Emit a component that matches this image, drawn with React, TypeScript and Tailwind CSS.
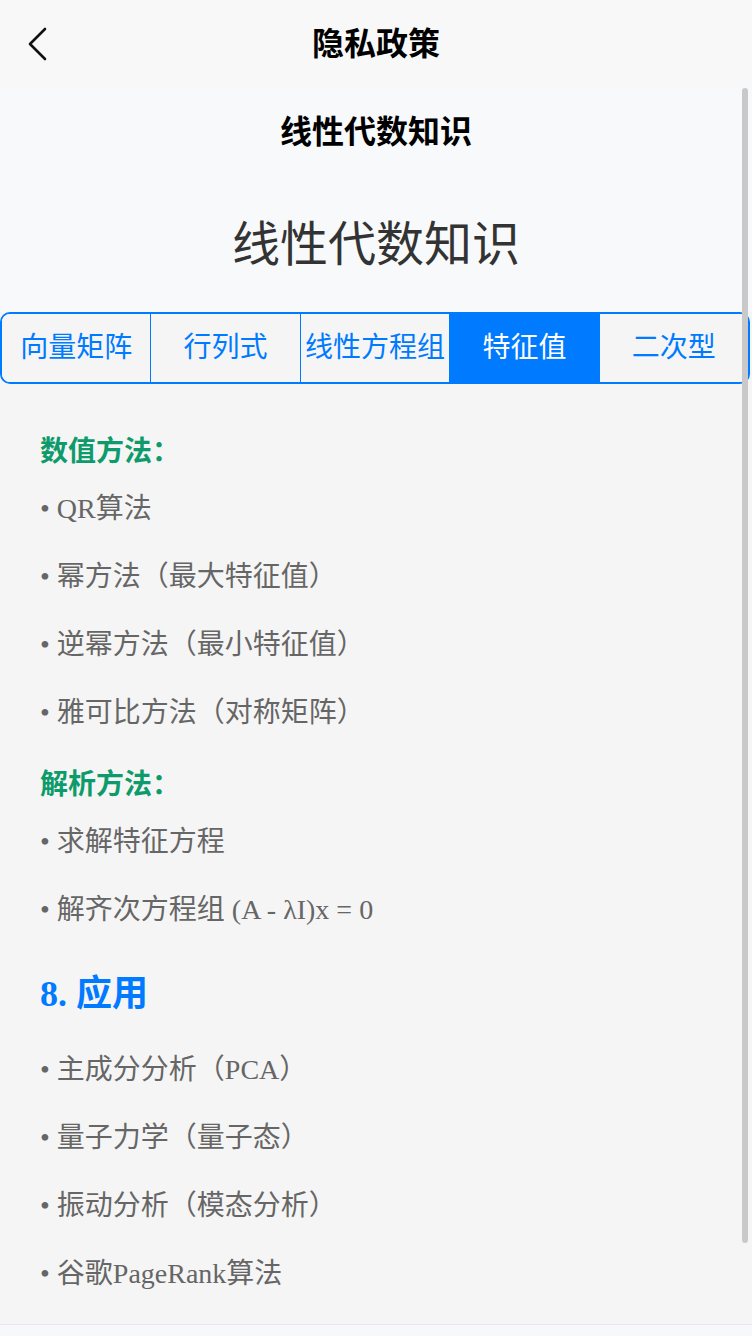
import React from 'react';

const FONT = '"Liberation Serif", "Noto Sans CJK SC", serif';

const tabs = ['向量矩阵', '行列式', '线性方程组', '特征值', '二次型'];
const ACTIVE = 3;

interface Section {
  title: string;
  items: string[];
}

const numeric: Section = {
  title: '数值方法：',
  items: ['QR算法', '幂方法（最大特征值）', '逆幂方法（最小特征值）', '雅可比方法（对称矩阵）'],
};

const analytic: Section = {
  title: '解析方法：',
  items: ['求解特征方程', '解齐次方程组 (A - λI)x = 0'],
};

const apps = ['主成分分析（PCA）', '量子力学（量子态）', '振动分析（模态分析）', '谷歌PageRank算法'];

function Item({ text }: { text: string }) {
  return <li className="text-[28px] leading-[42px] mb-[26px] text-[#666666]">• {text}</li>;
}

// note: li margin-bottom collapses with the next block's margin-top
function SubSection({ s, first }: { s: Section; first?: boolean }) {
  return (
    <div className={first ? '' : 'mt-[30px]'}>
      <h3 className="text-[28px] leading-[42px] font-bold text-[#0e9b6b] mb-[15px]">{s.title}</h3>
      <ul>
        {s.items.map((t) => (
          <Item key={t} text={t} />
        ))}
      </ul>
    </div>
  );
}

export default function App() {
  return (
    <div className="relative w-[752px] h-[1336px] overflow-hidden bg-[#f5f5f5]" style={{ fontFamily: FONT }}>
      {/* nav bar */}
      <header className="h-[88px] bg-[#f8f8f8] flex items-center justify-center relative">
        <svg className="absolute left-[26px] top-[27px]" width="22" height="34" viewBox="0 0 22 34" fill="none">
          <path d="M19 2 L4 17 L19 32" stroke="#111" strokeWidth="2.6" strokeLinecap="round" strokeLinejoin="round" />
        </svg>
        <h1 className="text-[32px] font-bold text-black">隐私政策</h1>
      </header>

      {/* title area */}
      <div className="bg-[#f8f9fb] h-[224px] flex flex-col items-center">
        <h2 className="text-[32px] font-bold text-black leading-[48px] mt-[20px]">线性代数知识</h2>
        <h2 className="text-[48px] text-[#333333] leading-[64px] mt-[57px]">线性代数知识</h2>
      </div>

      {/* tabs */}
      <div className="w-[750px] h-[72px] flex border-2 border-[#007aff] rounded-[10px] overflow-hidden">
        {tabs.map((t, i) => (
          <div
            key={t}
            className={[
              'flex-1 min-w-0 flex items-center justify-center text-[28px] whitespace-nowrap',
              i > 0 ? 'border-l border-[#007aff]' : '',
              i === ACTIVE ? 'bg-[#007aff] text-white' : 'bg-[#f5f5f5] text-[#007aff]',
            ].join(' ')}
          >
            {t}
          </div>
        ))}
      </div>

      {/* content */}
      <main className="px-[40px] pt-[47px]">
        <SubSection s={numeric} first />
        <SubSection s={analytic} />
        <h2 className="text-[36px] leading-[54px] font-bold text-[#007aff] mt-[36px] mb-[28px]">8. 应用</h2>
        <ul>
          {apps.map((t) => (
            <Item key={t} text={t} />
          ))}
        </ul>
      </main>

      {/* bottom strip */}
      <div className="absolute left-0 bottom-0 w-full h-[12px] bg-[#f7f8fa] border-t border-[#e6e8eb]" />

      {/* scroll indicator */}
      <div className="absolute right-[4px] top-[88px] w-[6px] h-[1155px] rounded-full bg-[#c9c9c9]" />
    </div>
  );
}
